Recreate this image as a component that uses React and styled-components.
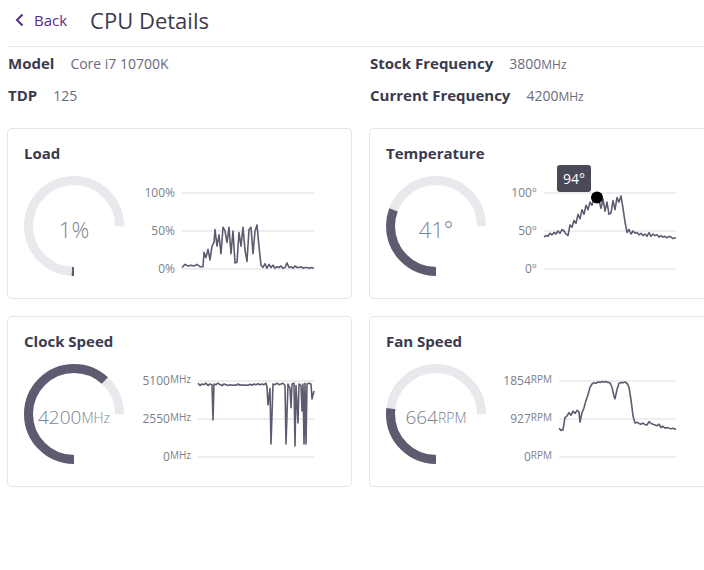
import React from 'react'
import styled, { createGlobalStyle } from 'styled-components'

const GlobalStyle = createGlobalStyle`
  body {
    margin: 0;
    overflow-x: hidden;
    font-family: "Open Sans", "Liberation Sans", sans-serif;
    background: #fff;
  }
`

const DARK = '#5e5b70'

const Page = styled.div`
  width: 708px;
  padding-left: 7px;
`

const Header = styled.div`
  display: flex;
  align-items: center;
  height: 47px;
  padding: 0 0 6px 8px;
  box-sizing: border-box;
  border-bottom: 1px solid #e6e6e9;
`

const BackLink = styled.a`
  display: flex;
  align-items: center;
  gap: 9px;
  color: #5b2a8c;
  font-size: 15px;
  text-decoration: none;
  cursor: pointer;
  margin-right: 23px;
`

const Title = styled.h1`
  margin: 0;
  font-size: 22px;
  font-weight: 400;
  line-height: 30px;
  color: #3b3a4e;
`

const Details = styled.div`
  display: grid;
  grid-template-columns: 345px 345px;
  grid-auto-rows: 32px;
  column-gap: 17px;
  padding-left: 1px;
`

const Field = styled.div`
  display: flex;
  align-items: center;
  height: 32px;
`

const FieldLabel = styled.span`
  font-size: 15px;
  font-weight: 700;
  color: #3b3a4e;
  margin-right: 16px;
`

const FieldValue = styled.span`
  font-size: 14px;
  color: #6c6b7b;
`

const Unit = styled.span`
  font-size: ${p => p.size || 12}px;
`

const Cards = styled.div`
  display: grid;
  grid-template-columns: 345px 345px;
  gap: 17px;
  margin-top: 17px;
`

const Card = styled.div`
  border: 1px solid #e4e5e9;
  border-radius: 5px;
  padding: 14px 16px 21px;
`

const CardTitle = styled.h3`
  margin: 0;
  font-size: 15px;
  font-weight: 700;
  line-height: 20px;
  color: #3b3a4e;
`

const CardBody = styled.div`
  display: flex;
  align-items: flex-start;
  margin-top: 13px;
`

const GaugeWrap = styled.div`
  position: relative;
  width: 100px;
  height: 100px;
  flex-shrink: 0;
`

const GaugeText = styled.div`
  position: absolute;
  inset: 0;
  display: flex;
  align-items: center;
  justify-content: center;
  padding-top: 6px;
  box-sizing: border-box;
  font-size: ${p => p.size}px;
  font-weight: 300;
  color: #7b8393;
`

const Chart = styled.div`
  display: flex;
  margin-left: auto;
  margin-right: 21px;
  gap: 7px;
`

const Labels = styled.div`
  display: flex;
  flex-direction: column;
  justify-content: space-between;
  align-items: flex-end;
  height: 92px;
  margin-top: 9px;
  font-size: 12px;
  line-height: 16px;
  color: #7b7f8c;
`

const Sup = styled.span`
  font-size: 10px;
  vertical-align: top;
  line-height: 12px;
`

const Plot = styled.div`
  position: relative;
  width: ${p => p.w}px;
  height: 100px;

  svg {
    display: block;
    overflow: visible;
  }
`

const Tooltip = styled.div`
  position: absolute;
  left: 13px;
  top: -11px;
  width: 34px;
  height: 27px;
  border-radius: 3px;
  background: #4a4957;
  color: #fff;
  font-size: 14px;
  line-height: 27px;
  text-align: center;
`

const R = 45.5
const C = 2 * Math.PI * R

const Gauge = ({ fraction, children, size }) => (
  <GaugeWrap>
    <svg width="100" height="100" viewBox="0 0 100 100">
      <circle
        cx="50"
        cy="50"
        r={R}
        fill="none"
        stroke="#e7e9ec"
        strokeWidth="9"
        strokeDasharray={`${C * 0.75} ${C}`}
        transform="rotate(90 50 50)"
      />
      <circle
        cx="50"
        cy="50"
        r={R}
        fill="none"
        stroke={DARK}
        strokeWidth="9"
        strokeDasharray={`${Math.max(C * 0.75 * fraction, 2)} ${C}`}
        transform="rotate(90 50 50)"
      />
    </svg>
    <GaugeText size={size}>{children}</GaugeText>
  </GaugeWrap>
)

const toPoints = (data, x0, max) =>
  data.map(([x, v]) => `${(x - x0).toFixed(1)},${(93 - (v / max) * 76).toFixed(1)}`).join(' ')

const LineChart = ({ labels, unit, small, data, x0, width, max, children, marker }) => (
  <Chart>
    <Labels>
      {labels.map(l => (
        <div key={l}>
          {l}
          {small ? <Sup>{unit}</Sup> : unit}
        </div>
      ))}
    </Labels>
    <Plot w={width}>
      <svg width={width} height="100">
        {[17, 55, 93].map(y => (
          <line key={y} x1="0" x2={width} y1={y} y2={y} stroke="#dcdde1" strokeWidth="1" />
        ))}
        <polyline
          points={toPoints(data, x0, max)}
          fill="none"
          stroke={DARK}
          strokeWidth="1.6"
          strokeLinejoin="round"
        />
        {marker && <circle cx={marker[0]} cy={marker[1]} r="6" fill="#000" />}
      </svg>
      {children}
    </Plot>
  </Chart>
)

const loadData = [
  [182, 2], [185, 6], [188, 4], [191, 5], [194, 4], [197, 6], [200, 3], [203, 3], [204, 22], [206, 15],
  [208, 26], [210, 12], [212, 30], [214, 35], [215, 52], [217, 30], [219, 45], [221, 20], [223, 55],
  [225, 50], [227, 35], [229, 55], [231, 20], [233, 50], [235, 8], [237, 9], [239, 48], [241, 30],
  [243, 55], [245, 25], [247, 10], [249, 52], [251, 55], [253, 20], [255, 50], [257, 58], [259, 30],
  [261, 5], [263, 2], [265, 7], [267, 1], [269, 6], [271, 2], [273, 5], [275, 1], [277, 3], [279, 2],
  [281, 4], [283, 1], [285, 2], [287, 8], [289, 2], [291, 3], [293, 1], [295, 4], [297, 2], [299, 2],
  [301, 3], [303, 1], [305, 2], [307, 2], [309, 1], [311, 2], [314, 1],
]

const tempData = [
  [544, 42], [546, 44], [548, 43], [550, 47], [552, 45], [554, 48], [556, 46], [558, 50], [560, 47],
  [562, 52], [564, 50], [566, 46], [568, 44], [570, 58], [572, 55], [574, 64], [576, 60], [578, 72],
  [580, 66], [582, 78], [584, 72], [586, 84], [588, 78], [590, 88], [592, 84], [594, 92], [597, 94],
  [599, 90], [601, 80], [603, 92], [605, 76], [607, 88], [609, 72], [611, 74], [613, 90], [615, 78],
  [617, 94], [619, 88], [621, 96], [623, 80], [625, 62], [627, 48], [629, 52], [631, 46], [633, 50],
  [635, 47], [637, 48], [639, 45], [641, 47], [643, 44], [645, 46], [647, 43], [649, 48], [651, 43],
  [653, 46], [655, 44], [657, 45], [659, 42], [661, 44], [663, 42], [665, 43], [667, 41], [669, 43],
  [671, 42], [673, 40], [676, 41],
]

const clockData = [
  [198, 4950], [200, 4800], [202, 4900], [204, 4850], [206, 4950], [208, 4800], [210, 4900], [212, 4850],
  [213, 2480], [214, 4900], [216, 4850], [218, 4950], [220, 4850], [222, 4800], [224, 4900], [226, 4850],
  [228, 4800], [230, 4850], [232, 4820], [234, 4830], [236, 4820], [238, 4900], [240, 4820], [242, 4850],
  [244, 4820], [246, 4830], [248, 4820], [250, 4880], [252, 4820], [254, 4900], [256, 4850], [258, 4920],
  [260, 4850], [262, 4900], [264, 4850], [266, 4950], [267, 4700], [268, 3490], [270, 4600], [271, 870],
  [273, 4900], [275, 4850], [277, 4950], [279, 4850], [281, 4900], [283, 4950], [285, 4800], [286, 870],
  [288, 4900], [290, 4600], [291, 3300], [292, 4900], [294, 4950], [295, 740], [296, 4800], [298, 2280],
  [299, 4900], [301, 4800], [302, 3090], [303, 4900], [304, 870], [305, 4950], [306, 870], [307, 4900],
  [309, 4950], [311, 4900], [312, 3890], [314, 4430],
]

const fanData = [
  [559, 700], [561, 650], [563, 660], [565, 960], [567, 1000], [569, 1080], [571, 1020], [573, 1120],
  [575, 1060], [577, 1140], [579, 1100], [580, 850], [582, 1080], [584, 1200], [586, 1380], [588, 1520],
  [590, 1700], [592, 1780], [594, 1810], [596, 1800], [598, 1830], [600, 1820], [602, 1840], [604, 1830],
  [606, 1840], [608, 1820], [610, 1810], [612, 1700], [614, 1480], [615, 1420], [617, 1650], [619, 1800],
  [621, 1820], [623, 1810], [625, 1830], [627, 1800], [629, 1700], [631, 1400], [633, 1000], [635, 830],
  [637, 850], [639, 820], [641, 800], [643, 830], [645, 790], [647, 780], [649, 860], [651, 820],
  [653, 800], [655, 780], [657, 760], [659, 800], [661, 720], [663, 750], [665, 700], [667, 720],
  [669, 700], [671, 690], [673, 700], [676, 670],
]

const App = () => (
  <Page>
    <GlobalStyle />
    <Header>
      <BackLink>
        <svg width="10" height="14" viewBox="0 0 10 14">
          <polyline points="7.5,1.5 2,7 7.5,12.5" fill="none" stroke="#5b2a8c" strokeWidth="2" />
        </svg>
        Back
      </BackLink>
      <Title>CPU Details</Title>
    </Header>

    <Details>
      <Field>
        <FieldLabel>Model</FieldLabel>
        <FieldValue>Core i7 10700K</FieldValue>
      </Field>
      <Field>
        <FieldLabel>Stock Frequency</FieldLabel>
        <FieldValue>
          3800<Unit>MHz</Unit>
        </FieldValue>
      </Field>
      <Field>
        <FieldLabel>TDP</FieldLabel>
        <FieldValue>125</FieldValue>
      </Field>
      <Field>
        <FieldLabel>Current Frequency</FieldLabel>
        <FieldValue>
          4200<Unit>MHz</Unit>
        </FieldValue>
      </Field>
    </Details>

    <Cards>
      <Card>
        <CardTitle>Load</CardTitle>
        <CardBody>
          <Gauge fraction={0.01} size={22}>1%</Gauge>
          <LineChart labels={['100', '50', '0']} unit="%" data={loadData} x0={182} width={132} max={100} />
        </CardBody>
      </Card>

      <Card>
        <CardTitle>Temperature</CardTitle>
        <CardBody>
          <Gauge fraction={0.41} size={22}>41°</Gauge>
          <LineChart
            labels={['100', '50', '0']}
            unit="°"
            data={tempData}
            x0={544}
            width={132}
            max={100}
            marker={[53, 21.6]}
          >
            <Tooltip>94°</Tooltip>
          </LineChart>
        </CardBody>
      </Card>

      <Card>
        <CardTitle>Clock Speed</CardTitle>
        <CardBody>
          <Gauge fraction={4200 / 5100} size={19}>
            4200<Unit size={14}>MHz</Unit>
          </Gauge>
          <LineChart
            labels={['5100', '2550', '0']}
            unit="MHz"
            small
            data={clockData}
            x0={198}
            width={116}
            max={5100}
          />
        </CardBody>
      </Card>

      <Card>
        <CardTitle>Fan Speed</CardTitle>
        <CardBody>
          <Gauge fraction={664 / 1854} size={19}>
            664<Unit size={14}>RPM</Unit>
          </Gauge>
          <LineChart
            labels={['1854', '927', '0']}
            unit="RPM"
            small
            data={fanData}
            x0={559}
            width={117}
            max={1854}
          />
        </CardBody>
      </Card>
    </Cards>
  </Page>
)

export default App
